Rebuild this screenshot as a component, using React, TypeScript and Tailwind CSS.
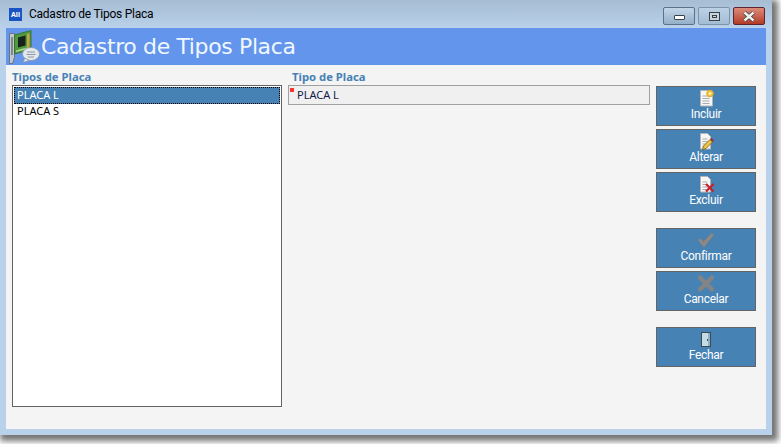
const ui = "font-['Noto_Sans','DejaVu_Sans',sans-serif]";

function CardIcon() {
  return (
    <svg width="34" height="38" viewBox="0 0 34 38" className="shrink-0">
      <path d="M2.500 5.500h5v24l-2 6h-3z" fill="#c3c8cc" stroke="#5f666b" strokeWidth="0.8" />
      <path d="M4 9h2v18H4z" fill="#80888e" />
      <path d="M7.500 7 24 2.500v19l-16.500 4.500z" fill="#4f9a3f" stroke="#2f6b2a" strokeWidth="0.8" />
      <path d="M11 9.500l7.500-2v10l-7.500 2z" fill="#18231d" />
      <path d="M20 6l2.500-.7v14l-2.500.7z" fill="#c9a63a" />
      <path d="M9 22.500l12-3.200v1.500l-12 3.200z" fill="#b5dc98" />
      <ellipse cx="24" cy="26" rx="8.500" ry="6.500" fill="#e3e8ee" stroke="#8b97a3" strokeWidth="0.8" />
      <path d="M18 30l-2 4.500 6-2z" fill="#e3e8ee" stroke="#8b97a3" strokeWidth="0.8" />
      <path d="M20 24h8M19.500 26.500h9M21 29h6" stroke="#8b97a3" strokeWidth="1" />
    </svg>
  );
}

function DocBase({ right }: { right: number }) {
  const d = `M4.500 1.500h${right - 8}l3 3v12.500h-${right - 5}z`;
  return (
    <>
      <path d={d} fill="#f6f6f4" stroke="#b1b5b8" />
      <path d={`M6.500 7h${right - 10}M6.500 9.500h${right - 10}M6.500 12h${right - 10}M6.500 14.500h${right - 10}`} stroke="#a8acaf" strokeWidth="1" />
    </>
  );
}

function IncluirIcon() {
  return (
    <svg width="20" height="20" viewBox="0 0 20 20">
      <DocBase right={17} />
      <circle cx="14" cy="4.500" r="3.300" fill="#f3c63f" stroke="#e2a72a" />
      <path d="M14 3v3M12.500 4.500h3" stroke="#fff6c8" strokeWidth="1" />
    </svg>
  );
}

function AlterarIcon() {
  return (
    <svg width="20" height="20" viewBox="0 0 20 20">
      <DocBase right={15} />
      <path d="M6.500 17.500l1-3.500 6.500-6.500 2.500 2.500-6.500 6.500z" fill="#f0c33c" stroke="#6e5a20" strokeWidth="0.8" />
      <path d="M14 7.500l1.500-1.500 2.500 2.500-1.500 1.500z" fill="#a3302c" />
    </svg>
  );
}

function ExcluirIcon() {
  return (
    <svg width="20" height="20" viewBox="0 0 20 20">
      <DocBase right={15} />
      <path d="M10 9l7.500 7.500M17.500 9l-7.500 7.500" stroke="#c8202a" strokeWidth="2.200" />
    </svg>
  );
}

function CheckIcon() {
  return (
    <svg width="20" height="20" viewBox="0 0 20 20">
      <path d="M2 9.500l2.500-2.500 3 3.500L15.500 2l2.500 2-10 12.500z" fill="#8a8a8a" stroke="#777" strokeWidth="0.6" />
    </svg>
  );
}

function CrossIcon() {
  return (
    <svg width="20" height="20" viewBox="0 0 20 20">
      <path d="M4 3.500l12 12M16 3.500l-12 12" stroke="#848484" strokeWidth="4.400" strokeLinecap="round" />
    </svg>
  );
}

function DoorIcon() {
  return (
    <svg width="20" height="20" viewBox="0 0 20 20">
      <path d="M5 2h10v15H5z" fill="#3e4a52" />
      <path d="M6 3h6v13H6z" fill="#c5dbe6" />
      <path d="M12 3h2v13h-2z" fill="#8fb0c0" />
      <path d="M11 9h1v2h-1z" fill="#3e4a52" />
    </svg>
  );
}

function ActionButton({ label, icon, className = "" }: { label: string; icon: React.ReactNode; className?: string }) {
  return (
    <button className={`flex h-10 w-[100px] flex-col items-center border border-[#646464] bg-[#4682b4] pt-[2px] font-['Roboto',sans-serif] text-[12px] leading-[14px] tracking-[-0.3px] text-white ${className}`}>
      <span className="flex h-[20px] items-center justify-center">{icon}</span>
      <span className="-mt-[2px]">{label}</span>
    </button>
  );
}

export default function App() {
  return (
    <div className={`h-[444px] w-[781px] overflow-hidden bg-white ${ui}`}>
      <div className="h-[435px] w-[772px] bg-[#b9d1ea] px-[6px] pb-[6px] shadow-[3px_3px_6px_3px_rgba(0,0,0,0.55)]">
        <div className="-mx-[6px] flex h-[28px] items-center bg-gradient-to-b from-[#a6bdd3] to-[#b9d1ea] pl-[9px] pr-[7px]">
          <div className="flex h-[13px] w-[13px] items-center justify-center bg-[#1a53c4] text-[7px] font-bold leading-none text-white">All</div>
          <span className="ml-[7px] font-['Roboto',sans-serif] text-[12px] tracking-[-0.25px] text-black">Cadastro de Tipos Placa</span>
          <div className="ml-auto flex gap-[3px] self-start pt-[7px]">
            <div className="flex h-[18px] w-[32px] items-center justify-center rounded-[2px] border border-[#5d7288] bg-gradient-to-b from-[#c3d6e8] to-[#94b0c9]">
              <div className="mt-[2px] h-[5px] w-[11px] rounded-[1px] border border-[#39424b] bg-white" />
            </div>
            <div className="flex h-[18px] w-[32px] items-center justify-center rounded-[2px] border border-[#7d93a9] bg-gradient-to-b from-[#bcd1e5] to-[#a3bdd5]">
              <div className="flex h-[9px] w-[11px] items-center justify-center border border-[#39424b] bg-[#c9d3dc]">
                <div className="h-[3px] w-[5px] border border-[#39424b]" />
              </div>
            </div>
            <div className="flex h-[18px] w-[32px] items-center justify-center rounded-[2px] border border-[#5e2430] bg-gradient-to-b from-[#dc8b79] to-[#b23a24]">
              <svg width="14" height="11" viewBox="0 0 14 11">
                <path d="M2.500 1.500l9 8M11.500 1.500l-9 8" stroke="#3d3f46" strokeWidth="4" />
                <path d="M2.500 1.500l9 8M11.500 1.500l-9 8" stroke="#f2f2f2" strokeWidth="2.400" />
              </svg>
            </div>
          </div>
        </div>

        <div className="flex h-[37px] items-center bg-[#6495ed] pl-[1px]">
          <CardIcon />
          <h1 className="font-['DejaVu_Sans',sans-serif] text-[22px] leading-none tracking-[-0.37px] text-[#f0f8ff]">Cadastro de Tipos Placa</h1>
        </div>

        <div className="flex h-[364px] gap-[6px] bg-[#f4f4f4] pl-[6px] pr-[10px] pt-[5px]">
          <div className="flex w-[270px] flex-col">
            <div className="h-[15px] text-[11.3px] font-bold leading-[14px] text-[#4682b4]">Tipos de Placa</div>
            <div className="h-[322px] border border-[#646464] bg-white p-px text-[11px] leading-[14px] text-black">
              <div className="flex h-[17px] items-center border border-dotted border-black bg-[#4682b4] pb-[2px] pl-[2px] text-white">PLACA L</div>
              <div className="flex h-[18px] items-center pb-[5px] pl-[3px]">PLACA S</div>
            </div>
          </div>

          <div className="flex w-[362px] flex-col">
            <div className="h-[15px] pl-[4px] text-[11.3px] font-bold leading-[14px] text-[#4682b4]">Tipo de Placa</div>
            <div className="relative flex h-[20px] items-center border border-[#a0a0a0] bg-[#f0f0f0] pl-[8px] text-[11px] text-[#10204a]">
              <span className="absolute left-px top-[2px] h-1 w-1 bg-[#ff3030]" />
              PLACA L
            </div>
          </div>

          <div className="flex flex-col pt-[16px]">
            <ActionButton label="Incluir" icon={<IncluirIcon />} />
            <ActionButton label="Alterar" icon={<AlterarIcon />} className="mt-[3px]" />
            <ActionButton label="Excluir" icon={<ExcluirIcon />} className="mt-[3px]" />
            <ActionButton label="Confirmar" icon={<CheckIcon />} className="mt-[16px]" />
            <ActionButton label="Cancelar" icon={<CrossIcon />} className="mt-[3px]" />
            <ActionButton label="Fechar" icon={<DoorIcon />} className="mt-[16px]" />
          </div>
        </div>
      </div>
    </div>
  );
}
